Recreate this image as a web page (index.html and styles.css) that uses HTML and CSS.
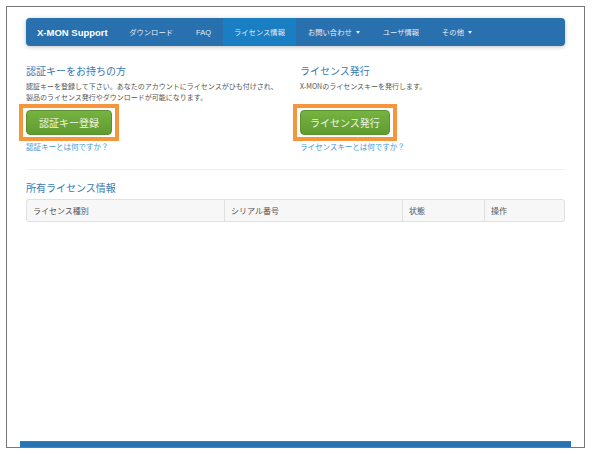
FILE: index.html
```html
<!DOCTYPE html>
<html lang="ja">
<head>
  <meta charset="UTF-8">
  <title>X-MON Support</title>
  <link rel="stylesheet" href="styles.css">
</head>
<body>

<div class="frame">
  <div class="page">
    <nav class="navbar">
      <a class="brand" href="#">X-MON Support</a>
      <ul class="nav">
        <li><a href="#">ダウンロード</a></li>
        <li><a href="#" class="latin">FAQ</a></li>
        <li class="active"><a href="#">ライセンス情報</a></li>
        <li><a href="#">お問い合わせ <span class="caret"></span></a></li>
        <li><a href="#">ユーザ情報</a></li>
        <li><a href="#">その他 <span class="caret"></span></a></li>
      </ul>
    </nav>

    <div class="row">
      <div class="col">
        <h3>認証キーをお持ちの方</h3>
        <p class="lead">認証キーを登録して下さい。あなたのアカウントにライセンスがひも付けされ、製品のライセンス発行やダウンロードが可能になります。</p>
        <div class="mark">
          <a class="btn-green" href="#">認証キー登録</a>
        </div>
        <a class="help" href="#">認証キーとは何ですか？</a>
      </div>
      <div class="col">
        <h3>ライセンス発行</h3>
        <p class="lead">X-MONのライセンスキーを発行します。</p>
        <div class="mark">
          <a class="btn-green" href="#">ライセンス発行</a>
        </div>
        <a class="help" href="#">ライセンスキーとは何ですか？</a>
      </div>
    </div>

    <hr>

    <h3>所有ライセンス情報</h3>
    <table class="licenses">
      <thead>
        <tr>
          <th class="c-type">ライセンス種別</th>
          <th class="c-serial">シリアル番号</th>
          <th class="c-state">状態</th>
          <th class="c-op">操作</th>
        </tr>
      </thead>
    </table>
  </div>
  <div class="footer-bar"></div>
</div>

</body>
</html>
```

FILE: styles.css
```css
body {
  margin: 0;
  background-color: #fff;
  font-family: "Noto Sans CJK JP", "Liberation Sans", sans-serif;
  color: #555;
}
.frame {
  margin: 6px;
  width: 577px;
  height: 440px;
  border: 1px solid #777;
  display: flex;
  flex-direction: column;
}
.page {
  flex: 1;
  padding: 11px 19px 0;
}
.footer-bar {
  height: 5px;
  margin: 0 13px;
  background-color: #2774b5;
  border-top: 1px solid #1b86c8;
}

/* navbar */
.navbar {
  display: flex;
  align-items: stretch;
  height: 28px;
  background-color: #2970ae;
  border-radius: 4px;
  box-shadow: 0 1px 4px rgba(0, 0, 0, 0.25);
}
.brand {
  display: flex;
  align-items: center;
  padding: 0 10px 0 11px;
  font-family: "Liberation Sans", sans-serif;
  font-weight: bold;
  font-size: 9.5px;
  color: #fff;
  text-decoration: none;
}
.nav {
  display: flex;
  margin: 0;
  padding: 0;
  list-style: none;
}
.nav li a {
  display: flex;
  align-items: center;
  height: 100%;
  padding: 0 11.5px;
  font-size: 7.3px;
  color: #e6edf5;
  text-decoration: none;
}
.nav li a.latin {
  font-family: "Liberation Sans", sans-serif;
  font-size: 7.5px;
}
.nav li.active a {
  background-color: #1a7ec2;
}
.caret {
  display: inline-block;
  width: 0;
  height: 0;
  margin-left: 4px;
  border-top: 3px solid #e6edf5;
  border-left: 2.5px solid transparent;
  border-right: 2.5px solid transparent;
}

/* upper two columns */
.row {
  display: grid;
  grid-template-columns: 274px 1fr;
  margin-top: 19px;
}
.col {
  padding-right: 16px;
}
h3 {
  margin: 0;
  font-size: 10px;
  line-height: 12px;
  font-weight: normal;
  color: #3878b4;
}
.lead {
  height: 22px;
  margin: 4px 0 0;
  font-size: 7px;
  line-height: 11px;
}
.mark {
  display: inline-block;
  margin: 1px 0 0 -7px;
  padding: 2px 3px;
  border: 4px solid #f6963c;
}
.btn-green {
  display: flex;
  align-items: center;
  justify-content: center;
  min-width: 86px;
  box-sizing: border-box;
  height: 25px;
  padding: 0 9px;
  font-size: 10px;
  color: #eef5e6;
  text-decoration: none;
  background: linear-gradient(#77b342, #5f9b2f);
  border: 1px solid #5b922d;
  border-radius: 4px;
}
.help {
  display: block;
  font-size: 7.5px;
  line-height: 11px;
  color: #3c9ad9;
  text-decoration: none;
}

hr {
  margin: 17px 0 12px;
  border: 0;
  border-top: 1px solid #eee;
}

/* license table */
.licenses {
  width: 100%;
  margin-top: 5px;
  border-collapse: separate;
  border-spacing: 0;
  table-layout: fixed;
  border: 1px solid #e0e0e0;
  border-radius: 3px;
  background-color: #f7f7f7;
}
.licenses th {
  box-sizing: border-box;
  height: 21px;
  padding: 0 6px;
  font-size: 8px;
  font-weight: normal;
  text-align: left;
  color: #555;
  border-left: 1px solid #e0e0e0;
}
.licenses th:first-child {
  border-left: 0;
}
.c-type { width: 197px; }
.c-serial { width: 178px; }
.c-state { width: 82px; }
```
